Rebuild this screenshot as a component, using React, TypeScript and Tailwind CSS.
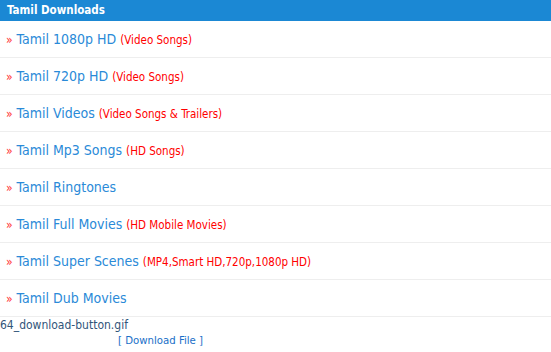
import React from 'react';

interface Category {
  title: string;
  note?: string;
}

const categories: Category[] = [
  { title: 'Tamil 1080p HD', note: '(Video Songs)' },
  { title: 'Tamil 720p HD', note: '(Video Songs)' },
  { title: 'Tamil Videos', note: '(Video Songs & Trailers)' },
  { title: 'Tamil Mp3 Songs', note: '(HD Songs)' },
  { title: 'Tamil Ringtones' },
  { title: 'Tamil Full Movies', note: '(HD Mobile Movies)' },
  { title: 'Tamil Super Scenes', note: '(MP4,Smart HD,720p,1080p HD)' },
  { title: 'Tamil Dub Movies' },
];

const App: React.FC = () => {
  return (
    <div className="w-[551px] h-[352px] bg-white overflow-hidden font-['DejaVu_Sans_Condensed','DejaVu_Sans',sans-serif]">
      {/* Header */}
      <div className="h-[21px] bg-[#1b88d4] px-[7px] flex items-center">
        <span className="text-white text-[11.5px] font-bold leading-none">Tamil Downloads</span>
      </div>

      {/* Category list */}
      <ul>
        {categories.map(cat => (
          <li
            key={cat.title}
            className="h-[37px] border-b border-[#eeeeee] flex items-center pl-[6px] pt-[1px] whitespace-nowrap"
          >
            <div className="flex items-baseline">
              <span className="text-[#ff3333] text-[12px] mr-[4px]">»</span>
              <a className="text-[#2a8ad8] text-[14px]">{cat.title}</a>
              {cat.note && (
                <span className="text-[#ff0000] text-[11.5px] ml-[4px]">{cat.note}</span>
              )}
            </div>
          </li>
        ))}
      </ul>

      {/* Attachment */}
      <div className="text-[12px] leading-[15px] pt-[1px]">
        <div className="text-[#31557a]">64_download-button.gif</div>
        <div className="pl-[118px] text-[#1a6fc8] text-[11.3px]">[ Download File ]</div>
      </div>
    </div>
  );
};

export default App;
